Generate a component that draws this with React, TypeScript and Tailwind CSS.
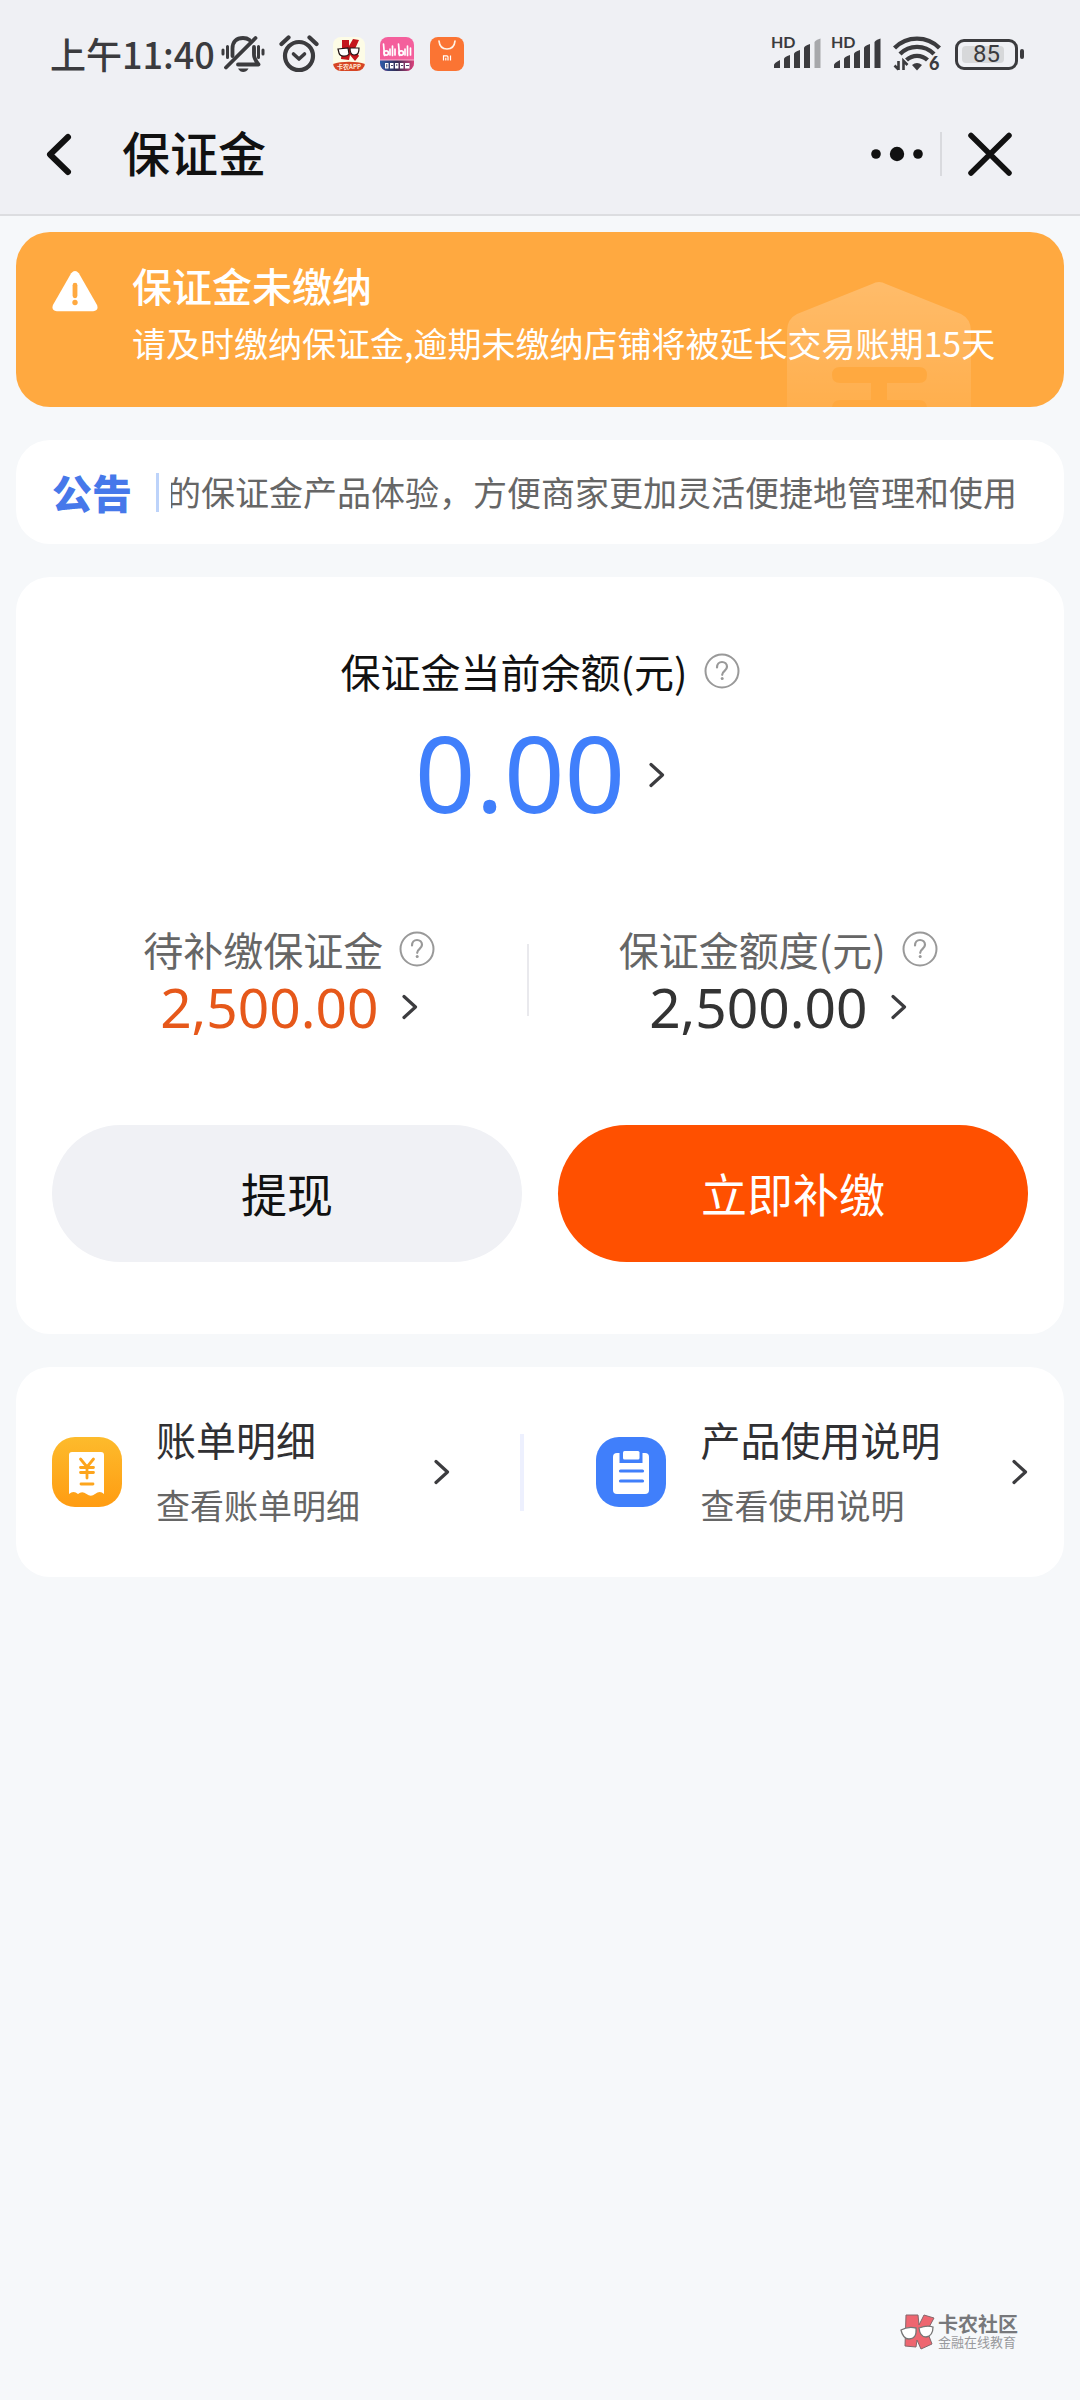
import React from "react";

const INK = "#3b3b3e";

function MutedBell() {
  return (
    <svg className="h-10 w-11 shrink-0" viewBox="0 0 44 40" fill="none" stroke={INK} strokeWidth="3.8" strokeLinecap="round" aria-hidden="true">
      <path d="M2 16v4M6.500 12.500v11M42 16v4M37.500 12.500v11M33 15v4" strokeWidth="3" />
      <path d="M11.500 22V14.500C11.500 7.500 15.500 4 22 4c2.500 0 5 .8 6.500 2" />
      <path d="M33 13v8c0 3 1.500 5.500 4.500 9.500H17" strokeLinejoin="round" />
      <path d="M34.500 4 5 33.500" />
      <path d="M17 34.500h10.500c-1.500 2.600-3.200 3.500-5.300 3.500s-3.800-1-5.200-3.500z" fill={INK} stroke="none" />
    </svg>
  );
}

function Alarm() {
  return (
    <svg className="h-10 w-10 shrink-0" viewBox="0 0 40 40" fill="none" stroke={INK} strokeWidth="4.200" strokeLinecap="round" strokeLinejoin="round" aria-hidden="true">
      <circle cx="20" cy="22" r="14" />
      <path d="M14.500 20l5.500 5 5.500-5" strokeWidth="3.600" />
      <path d="M2.500 10 9.500 3.500M37.500 10 30.500 3.500" />
    </svg>
  );
}

function CardAppIcon() {
  return (
    <svg className="h-9 w-8 shrink-0" viewBox="0 0 32 36" aria-hidden="true">
      <defs>
        <clipPath id="card-app">
          <rect y="1" width="32" height="34" rx="8" />
        </clipPath>
      </defs>
      <g clipPath="url(#card-app)">
        <rect width="32" height="36" fill="#fdfce6" />
        <path d="M9 4h7v6l4-7 6 1-4 9 4 7-4 5-5-6-1 5-8-1 1-9z" fill="#c4161c" />
        <path d="M5 13l10-1 1 6c-2 3-9 3-10-1zM17 12l9 0c0 5-1 7-5 7-3 0-4-3-4-7z" fill="#fff" stroke="#221414" strokeWidth="1.200" />
        <path d="M0 28c8-3 24-3 32 0v8H0z" fill="#d64524" />
        <text x="16" y="33" fontSize="6" fontWeight="700" textAnchor="middle" fill="#ffe9d5" fontFamily="Noto Sans CJK SC, sans-serif">卡农APP</text>
      </g>
    </svg>
  );
}

function BiliIcon() {
  return (
    <svg className="h-9 w-9 shrink-0" viewBox="0 0 36 36" aria-hidden="true">
      <defs>
        <clipPath id="bili-app">
          <rect x="1" y="1" width="34" height="34" rx="8" />
        </clipPath>
        <linearGradient id="bili-foot">
          <stop offset="0" stopColor="#2c5fb0" />
          <stop offset=".5" stopColor="#352b52" />
          <stop offset="1" stopColor="#e5437e" />
        </linearGradient>
      </defs>
      <g clipPath="url(#bili-app)">
        <rect width="36" height="36" fill="#f45f9c" />
        <rect y="24" width="36" height="12" fill="url(#bili-foot)" />
        <rect y="23.500" width="36" height="1" fill="#f9b6d0" />
        <g fill="none" stroke="#fff" strokeWidth="1.700" strokeLinecap="round">
          <path d="M4.500 8l1 11.500M11 13v6M13.500 10v9.500M16 13v6M19.500 8l1 11.500M26 13v6M28.500 10v9.500M31.500 12v7" />
          <circle cx="7.200" cy="17" r="2.200" />
          <circle cx="22.200" cy="17" r="2.200" />
        </g>
        <path d="M6 27h3.500v5.500H6zM11 27h3.500v5.500H11zM16 27h3.500v5.500H16zM21 27h3.500v5.500H21zM26 27h4.500v5.500H26z" fill="#fff" />
        <path d="M7.800 28v3.500M12 29.500h2M17.800 28v2M22 29.500h2M27 29.500h3" stroke="#352b52" strokeWidth=".9" />
      </g>
    </svg>
  );
}

function StoreIcon() {
  return (
    <svg className="h-9 w-9 shrink-0" viewBox="0 0 36 36" aria-hidden="true">
      <rect x="1" y="1" width="34" height="34" rx="8" fill="#fb7433" />
      <path d="M10 5c.5 5 3.500 8 8 8s7.500-3 8-8" fill="none" stroke="#fff3e6" strokeWidth="1.700" strokeLinecap="round" />
      <path d="M14.500 24.500v-4.700h3.300c.8 0 1.200.4 1.200 1.200v3.500M16.800 21.800v2.700M21.500 19.500v5" fill="none" stroke="#fff" strokeWidth="1.200" />
    </svg>
  );
}

function Signal({ weak }: { weak?: boolean }) {
  return (
    <svg className="h-10 w-[52px] shrink-0" viewBox="0 0 52 40" aria-hidden="true">
      <text x="0" y="14" fontSize="16" fontWeight="700" fill={INK} fontFamily="Lato, sans-serif">HD</text>
      <g fill={INK}>
        <path d="M3 34v-3q0-2 6-5v8zM13 34V25q0-2 6-4v13zM23 34V20q0-2 6-4v18zM33 34V14q0-2 6-4v24z" />
        <path d="M43.500 34V8.500q0-2 6-4V34z" opacity={weak ? 0.4 : 1} />
      </g>
    </svg>
  );
}

function Wifi() {
  return (
    <svg className="h-10 w-12 shrink-0" viewBox="0 0 48 40" fill="none" stroke={INK} strokeWidth="4.400" aria-hidden="true">
      <path d="M1.500 14C14 1.500 34 1.500 46.500 14M7 20c9.500-9.500 24.500-9.500 34 0M13.500 26c6-5.500 15-5.500 21 0" />
      <path d="M19 31q5-4 10 0l-5 5.500z" fill={INK} stroke="none" />
      <path d="M5.500 27v9M1.500 31.500l4 4M10.500 36v-9l4 4" strokeWidth="2.600" />
      <text x="36" y="36" fontSize="18" fontWeight="900" fill={INK} stroke="none" fontFamily="Lato, sans-serif">6</text>
    </svg>
  );
}

function Battery() {
  return (
    <div className="flex items-center gap-0.5" role="img" aria-label="电量 85">
      <div className="relative flex h-[31px] w-[63px] items-center justify-center rounded-[9px] border-[3px] border-[#3b3b3e]">
        <span className="absolute inset-y-1 left-1 w-[42px] rounded-sm bg-[#d7d8da]" />
        <span className="relative font-[Roboto] text-2xl leading-6 text-[#3b3b3e]">85</span>
      </div>
      <span className="h-2.5 w-1 rounded-sm bg-[#3b3b3e]" />
    </div>
  );
}

function Chevron() {
  return (
    <svg className="h-7 w-4 shrink-0" viewBox="0 0 16 28" fill="none" stroke="#3c3c3f" strokeWidth="3.200" strokeLinecap="round" strokeLinejoin="round" aria-hidden="true">
      <path d="M2 3.500 13.500 14 2 24.500" />
    </svg>
  );
}

function Help({ label }: { label: string }) {
  return (
    <button type="button" aria-label={label} className="shrink-0">
      <svg className="size-9" viewBox="0 0 36 36" fill="none" stroke="#999" strokeWidth="2" aria-hidden="true">
        <circle cx="18" cy="18" r="16.500" />
        <path d="M13 14.500c0-3.500 2.200-5.500 5-5.500s5 2 5 4.800c0 4-4.800 4-4.800 8" strokeWidth="2.200" strokeLinecap="round" />
        <circle cx="18.200" cy="25.500" r="1.500" fill="#999" stroke="none" />
      </svg>
    </button>
  );
}

function BillIcon() {
  return (
    <svg className="size-[70px] shrink-0" viewBox="0 0 70 70" aria-hidden="true">
      <defs>
        <linearGradient id="bill" x2="0" y2="1">
          <stop offset="0" stopColor="#fdbb2c" />
          <stop offset="1" stopColor="#ff9c12" />
        </linearGradient>
      </defs>
      <rect width="70" height="70" rx="23" fill="url(#bill)" />
      <path d="M17 18q0-3 3-3h29q3 0 3 3v39q-4-4-9 0-4 3.500-8.500 0-4.500-3.500-8.500 0-4.500-4-9 0z" fill="#fff" />
      <g fill="none" stroke="#fda51d" strokeWidth="2.800" strokeLinecap="round">
        <path d="M28.500 22 35 30l6.500-8M35 30v11M28.500 30.500h13M28.500 35.500h13M29 47h12" />
      </g>
    </svg>
  );
}

function GuideIcon() {
  return (
    <svg className="size-[70px] shrink-0" viewBox="0 0 70 70" aria-hidden="true">
      <rect width="70" height="70" rx="23" fill="#407ffb" />
      <rect x="17" y="16" width="36" height="41" rx="4" fill="#fff" />
      <path d="M23.500 12h23v14h-23z" fill="#407ffb" />
      <rect x="27" y="14" width="16.500" height="8.500" rx="1.500" fill="#fff" />
      <path d="M24.500 34h22M24.500 44h22" stroke="#407ffb" strokeWidth="3.200" strokeLinecap="round" />
    </svg>
  );
}

function Amount({ value, tone }: { value: string; tone: string }) {
  return (
    <button type="button" className="flex items-center gap-6">
      <span className={`font-['Noto_Sans'] text-[55px] leading-[62px] ${tone}`}>{value}</span>
      <Chevron />
    </button>
  );
}

function Entry({ icon, title, note, grow }: { icon: React.ReactNode; title: string; note: string; grow: string }) {
  return (
    <a href="#" className={`flex items-center ${grow}`}>
      {icon}
      <span className="ml-[34px] flex flex-1 flex-col gap-4">
        <span className="text-[40px] leading-[50px] text-[#303033]">{title}</span>
        <span className="text-[34px] leading-[50px] text-[#666]">{note}</span>
      </span>
      <Chevron />
    </a>
  );
}

export default function App() {
  return (
    <div className="flex min-h-screen flex-col bg-[#f6f8fa] font-['Noto_Sans_CJK_SC',sans-serif] text-[#111]">
      <header className="border-b-2 border-[#dcdde0] bg-[#eff0f4]">
        <div className="flex h-[108px] items-center pl-[50px] pr-14">
          <span className="pb-0.5 text-4xl font-medium text-[#3b3b3e]">上午11:40</span>
          <div className="ml-1.5 flex items-center gap-3.5">
            <MutedBell />
            <Alarm />
            <CardAppIcon />
            <BiliIcon />
            <StoreIcon />
          </div>
          <div className="ml-auto flex items-center">
            <Signal weak />
            <span className="ml-2"><Signal /></span>
            <span className="ml-2.5 mr-3.5"><Wifi /></span>
            <Battery />
          </div>
        </div>
        <nav className="flex h-[106px] items-start pl-11 pr-[66px] pt-4">
          <button type="button" aria-label="返回" className="flex h-[60px] w-8 items-center">
            <svg className="h-12 w-8" viewBox="0 0 32 48" fill="none" stroke="#111" strokeWidth="6" strokeLinecap="round" strokeLinejoin="round" aria-hidden="true">
              <path d="M24 7 6 24.500 24 42" />
            </svg>
          </button>
          <h1 className="ml-[46px] text-5xl font-medium leading-[54px]">保证金</h1>
          <div className="ml-auto flex h-[60px] items-center">
            <button type="button" aria-label="更多">
              <svg className="h-4 w-[54px]" viewBox="0 0 54 16" fill="#111" aria-hidden="true">
                <circle cx="6" cy="8" r="4.800" />
                <circle cx="27" cy="8" r="7.200" />
                <circle cx="48" cy="8" r="4.800" />
              </svg>
            </button>
            <span className="mx-4 h-11 w-0.5 bg-[#d9dade]" />
            <button type="button" aria-label="关闭" className="ml-2">
              <svg className="size-12" viewBox="0 0 48 48" stroke="#111" strokeWidth="5.500" strokeLinecap="round" aria-hidden="true">
                <path d="M5 5.500 43 43M43 5.500 5 43" />
              </svg>
            </button>
          </div>
        </nav>
      </header>

      <main className="flex flex-col gap-[33px] px-4 pt-4">
        <section className="relative flex h-[175px] overflow-hidden rounded-[34px] bg-[#ffa940] px-9 pt-[26px] text-white">
          <svg className="absolute bottom-0 right-[92px] h-[126px] w-[186px]" viewBox="0 0 186 126" aria-hidden="true">
            <defs>
              <linearGradient id="house" x2="0" y2="1">
                <stop offset="0" stopColor="#fff" stopOpacity=".22" />
                <stop offset="1" stopColor="#fff" stopOpacity=".07" />
              </linearGradient>
            </defs>
            <path
              fillRule="evenodd"
              fill="url(#house)"
              d="M1 126V50q0-12 10-17L86 3q7-4 14 0l75 30q10 5 10 17v76H141q-1-7-8-7H101v-17h32q8 0 8-8t-8-8H54q-8 0-8 8t8 8h31v17H54q-7 0-8 7z"
            />
          </svg>
          <svg className="mt-3 h-[42px] w-[46px] shrink-0" viewBox="0 0 48 43" aria-hidden="true">
            <path d="M20 3q4-4.500 8 0l19 33q2 6-4 6.500H5q-6-.5-4-6.500z" fill="#fff" />
            <path d="M24 15.500v11" stroke="#ffa940" strokeWidth="5" strokeLinecap="round" />
            <circle cx="24" cy="33.500" r="2.800" fill="#ffa940" />
          </svg>
          <div className="relative ml-[34px] whitespace-nowrap">
            <h2 className="text-[40px] font-medium leading-[54px]">保证金未缴纳</h2>
            <p className="mt-1 text-[34px] leading-[54px]">请及时缴纳保证金,逾期未缴纳店铺将被延长交易账期15天</p>
          </div>
        </section>

        <section className="flex h-[104px] items-center rounded-[34px] bg-white px-9">
          <h2 className="text-[40px] font-black leading-[60px] text-[#4678ea]">公告</h2>
          <span className="ml-6 h-[39px] w-[3px] bg-[#bdd3fa]" />
          <div className="ml-3 min-w-0 flex-1 overflow-hidden">
            <p className="-ml-1 whitespace-nowrap text-[34px] leading-[50px] text-[#666]">的保证金产品体验，方便商家更加灵活便捷地管理和使用</p>
          </div>
        </section>

        <section className="rounded-[34px] bg-white px-9 pb-[72px] pt-[67px]">
          <div className="flex items-center justify-center gap-4">
            <h2 className="text-[40px] leading-[54px]">保证金当前余额(元)</h2>
            <Help label="余额说明" />
          </div>
          <button type="button" className="mx-auto mt-[22px] flex items-center gap-6">
            <span className="pb-1.5 font-['Noto_Sans'] text-[106px] leading-[104px] text-[#407ffb]">0.00</span>
            <Chevron />
          </button>
          <div className="mt-[92px] grid grid-cols-[19fr_2px_20fr] items-center">
            <div className="flex flex-col items-center">
              <div className="flex items-center gap-4">
                <h3 className="text-[40px] leading-[54px] text-[#666]">待补缴保证金</h3>
                <Help label="待补缴说明" />
              </div>
              <Amount value="2,500.00" tone="text-[#e6581a]" />
            </div>
            <span className="h-[72px] bg-[#e9e9ed]" />
            <div className="flex flex-col items-center">
              <div className="flex items-center gap-4">
                <h3 className="text-[40px] leading-[54px] text-[#666]">保证金额度(元)</h3>
                <Help label="额度说明" />
              </div>
              <Amount value="2,500.00" tone="text-[#333]" />
            </div>
          </div>
          <div className="mt-[87px] grid grid-cols-2 gap-9">
            <button type="button" className="h-[137px] rounded-full bg-[#f0f1f5] pb-0.5 text-[46px] text-[#111]">提现</button>
            <button type="button" className="h-[137px] rounded-full bg-[#ff5000] pb-0.5 text-[46px] text-white">立即补缴</button>
          </div>
        </section>

        <section className="flex h-[210px] items-center rounded-[34px] bg-white px-9">
          <Entry icon={<BillIcon />} title="账单明细" note="查看账单明细" grow="flex-[12]" />
          <span className="ml-[70px] mr-[72px] h-[77px] w-1 bg-[#edf0fe]" />
          <Entry icon={<GuideIcon />} title="产品使用说明" note="查看使用说明" grow="flex-[13]" />
        </section>
      </main>

      <footer className="mt-auto flex items-center justify-end gap-0.5 pb-[50px] pr-[62px]">
        <svg className="h-9 w-9" viewBox="0 0 36 36" aria-hidden="true">
          <path d="M6 1h12l1 10 5-10 10 3-7 13 5 13-11 5-4-9-1 7-11-1z" fill="#ee6670" stroke="#84686c" strokeWidth="1" />
          <path d="M1 16q7-4 15-2 1 11-7 11-6 0-8-9zM19 14q8-3 14-1 0 9-7 10-6 0-7-9z" fill="#fff" stroke="#777" strokeWidth="1.300" />
        </svg>
        <div>
          <p className="text-xl font-bold leading-5 text-[#77787b]">卡农社区</p>
          <p className="text-[13px] leading-4 text-[#999a9d]">金融在线教育</p>
        </div>
      </footer>
    </div>
  );
}
